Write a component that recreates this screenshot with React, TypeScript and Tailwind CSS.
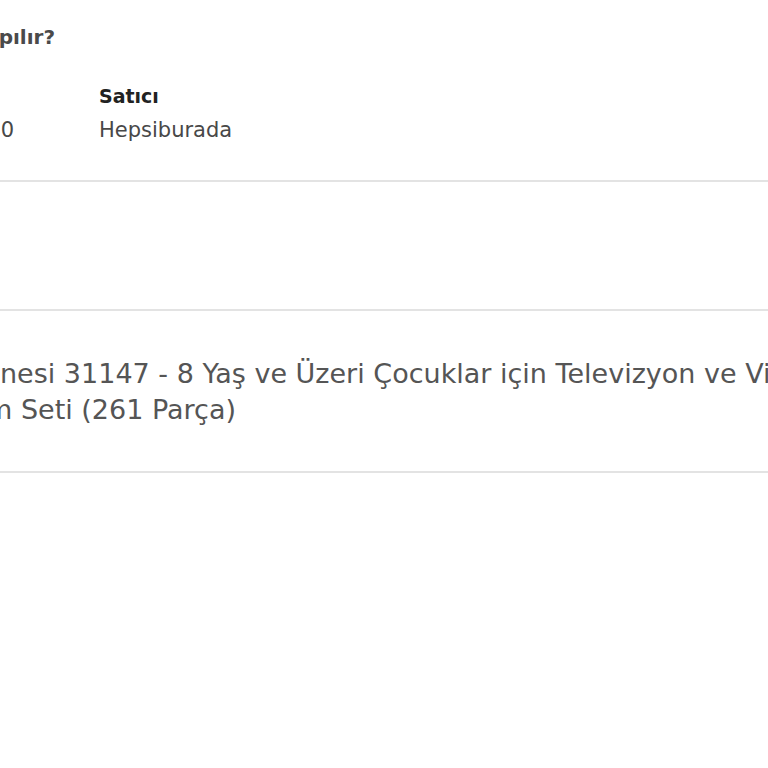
export default function App() {
  return (
    <main className="min-h-screen w-[768px] overflow-hidden bg-white font-['DejaVu_Sans',sans-serif]">
      {/* Satıcı bilgisi */}
      <section className="border-b-2 border-[#e3e3e3] pt-[23px] pb-[36px]">
        <div className="flex whitespace-nowrap">
          <div className="flex w-[55px] shrink-0 justify-end">
            <h2 className="shrink-0 text-[20px] leading-[28px] font-bold text-[#4a4a4a]">
              Satış nasıl yapılır?
            </h2>
          </div>
        </div>
        <div className="mt-[31px] flex whitespace-nowrap">
          <div className="flex w-[14px] shrink-0 justify-end">
            <div className="flex shrink-0 flex-col">
              <span className="text-[19px] leading-[28px] font-bold text-[#222]">Fiyat</span>
              <span className="mt-[6px] text-[21px] leading-[28px] text-[#484848]">1.299,90</span>
            </div>
          </div>
          <div className="ml-[85px] flex flex-col">
            <span className="text-[19px] leading-[28px] font-bold text-[#222]">Satıcı</span>
            <span className="mt-[6px] text-[21px] leading-[28px] text-[#484848]">Hepsiburada</span>
          </div>
        </div>
      </section>

      <section className="h-[129px] border-b-2 border-[#e3e3e3]" />

      {/* Ürün adı */}
      <section className="border-b-2 border-[#e3e3e3] pt-[45px] pb-[43px] text-[27px] leading-[36px] text-[#555] whitespace-nowrap">
        <div className="flex">
          <span className="flex w-0 shrink-0 justify-end">
            <span className="shrink-0">LEGO® Creator 3'ü 1 Arada Retro Kamera Maki</span>
          </span>
          <span>nesi 31147 - 8 Yaş ve Üzeri Çocuklar için Televizyon ve Video Kamera</span>
        </div>
        <div className="-ml-[14px] flex">
          <span className="flex w-0 shrink-0 justify-end">
            <span className="shrink-0">İçeren Yaratıcı Oyuncak Yapı</span>
          </span>
          <span>m Seti (261 Parça)</span>
        </div>
      </section>
    </main>
  );
}
